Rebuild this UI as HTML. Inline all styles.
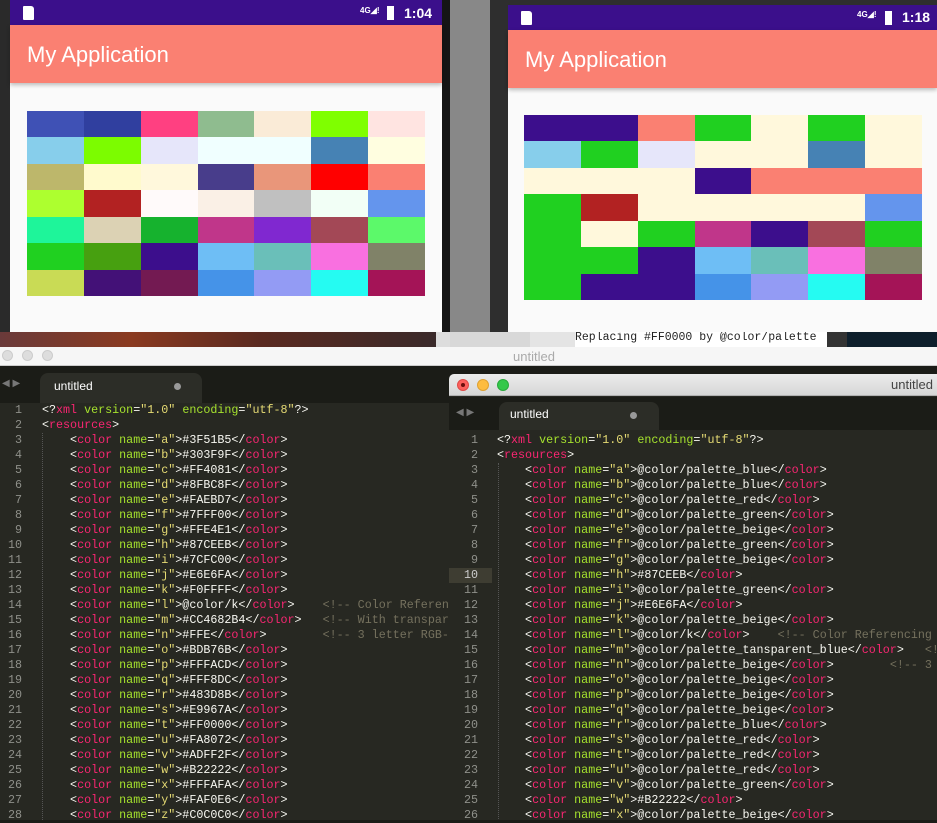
<!DOCTYPE html>
<html><head><meta charset="utf-8"><style>
*{margin:0;padding:0;box-sizing:border-box}
body{width:937px;height:820px;overflow:hidden;background:#1b1c17;position:relative;font-family:"Liberation Sans",sans-serif}
.abs{position:absolute}
.grid{position:absolute;display:grid;grid-template-columns:repeat(7,1fr);grid-template-rows:repeat(7,1fr)}
.code{position:absolute;font-family:"Liberation Mono",monospace;font-size:11.7px;line-height:15px;color:#f8f8f2;white-space:pre}
.code i{font-style:normal;color:#f92672}
.code b{font-weight:normal;color:#a6e22e}
.code u{text-decoration:none;color:#e6db74}
.code s{text-decoration:none;color:#75715e}
.ln{position:absolute;font-family:"Liberation Mono",monospace;font-size:11.7px;line-height:15px;color:#8f908a;text-align:right;white-space:pre}
.status{color:#fff;font-size:13px;font-weight:bold}
.title{color:#fff;font-size:22px}
</style></head><body>

<!-- left phone -->
<div class="abs" style="left:0;top:0;width:450px;height:332px;background:#2a2a2a"></div>
<div class="abs" style="left:442px;top:0;width:8px;height:332px;background:#151515"></div>
<div class="abs" style="left:10px;top:0;width:432px;height:332px;background:#fafafa"></div>
<div class="abs" style="left:10px;top:0;width:432px;height:25px;background:#3b0f8b"></div>
<div class="abs" style="left:23px;top:6px;width:11px;height:14px;background:#fff;border-radius:1px 3px 1px 1px"></div>
<div class="abs status" style="left:360px;top:6px;font-size:8px">4G◢!</div>
<div class="abs" style="left:387px;top:6px;width:7px;height:14px;background:#fff"></div>
<div class="abs status" style="left:404px;top:5px;font-size:14px">1:04</div>
<div class="abs" style="left:10px;top:25px;width:432px;height:58px;background:#fa8072;box-shadow:0 2px 4px rgba(0,0,0,.25)"></div>
<div class="abs title" style="left:27px;top:42px">My Application</div>
<div class="grid" style="left:27px;top:111px;width:398px;height:185px">
<div style="background:#3F51B5"></div><div style="background:#303F9F"></div><div style="background:#FF4081"></div><div style="background:#8FBC8F"></div><div style="background:#FAEBD7"></div><div style="background:#7FFF00"></div><div style="background:#FFE4E1"></div>
<div style="background:#87CEEB"></div><div style="background:#7CFC00"></div><div style="background:#E6E6FA"></div><div style="background:#F0FFFF"></div><div style="background:#F0FFFF"></div><div style="background:#4682B4"></div><div style="background:#FFFEE0"></div>
<div style="background:#BDB76B"></div><div style="background:#FFFACD"></div><div style="background:#FFF8DC"></div><div style="background:#483D8B"></div><div style="background:#E9967A"></div><div style="background:#FF0000"></div><div style="background:#FA8072"></div>
<div style="background:#ADFF2F"></div><div style="background:#B22222"></div><div style="background:#FFFAFA"></div><div style="background:#FAF0E6"></div><div style="background:#C0C0C0"></div><div style="background:#F2FFF6"></div><div style="background:#6495ED"></div>
<div style="background:#1EF59A"></div><div style="background:#DCD2B4"></div><div style="background:#16B22E"></div><div style="background:#C0368A"></div><div style="background:#8028D0"></div><div style="background:#A34856"></div><div style="background:#5CF96A"></div>
<div style="background:#20D020"></div><div style="background:#47A010"></div><div style="background:#3C0E8C"></div><div style="background:#6EBEF5"></div><div style="background:#6ABFB9"></div><div style="background:#F970E0"></div><div style="background:#808268"></div>
<div style="background:#C9DB55"></div><div style="background:#431177"></div><div style="background:#731A52"></div><div style="background:#4593E8"></div><div style="background:#939BF4"></div><div style="background:#25FBF2"></div><div style="background:#A41457"></div>
</div>

<!-- right phone -->
<div class="abs" style="left:450px;top:0;width:40px;height:332px;background:#888"></div>
<div class="abs" style="left:490px;top:0;width:447px;height:332px;background:#2e2e2e"></div>
<div class="abs" style="left:508px;top:5px;width:429px;height:327px;background:#fafafa"></div>
<div class="abs" style="left:508px;top:5px;width:429px;height:25px;background:#3b0f8b"></div>
<div class="abs" style="left:521px;top:11px;width:11px;height:14px;background:#fff;border-radius:1px 3px 1px 1px"></div>
<div class="abs status" style="left:857px;top:10px;font-size:8px">4G◢!</div>
<div class="abs" style="left:885px;top:11px;width:7px;height:14px;background:#fff"></div>
<div class="abs status" style="left:902px;top:9px;font-size:14px">1:18</div>
<div class="abs" style="left:508px;top:30px;width:429px;height:58px;background:#fa8072;box-shadow:0 2px 4px rgba(0,0,0,.25)"></div>
<div class="abs title" style="left:525px;top:47px">My Application</div>
<div class="grid" style="left:524px;top:115px;width:398px;height:185px">
<div style="background:#3C0E8C"></div><div style="background:#3C0E8C"></div><div style="background:#FA8072"></div><div style="background:#20D020"></div><div style="background:#FFF8DC"></div><div style="background:#20D020"></div><div style="background:#FFF8DC"></div>
<div style="background:#87CEEB"></div><div style="background:#20D020"></div><div style="background:#E6E6FA"></div><div style="background:#FFF8DC"></div><div style="background:#FFF8DC"></div><div style="background:#4682B4"></div><div style="background:#FFF8DC"></div>
<div style="background:#FFF8DC"></div><div style="background:#FFF8DC"></div><div style="background:#FFF8DC"></div><div style="background:#3C0E8C"></div><div style="background:#FA8072"></div><div style="background:#FA8072"></div><div style="background:#FA8072"></div>
<div style="background:#20D020"></div><div style="background:#B22222"></div><div style="background:#FFF8DC"></div><div style="background:#FFF8DC"></div><div style="background:#FFF8DC"></div><div style="background:#FFF8DC"></div><div style="background:#6495ED"></div>
<div style="background:#20D020"></div><div style="background:#FFF8DC"></div><div style="background:#20D020"></div><div style="background:#C0368A"></div><div style="background:#3C0E8C"></div><div style="background:#A34856"></div><div style="background:#20D020"></div>
<div style="background:#20D020"></div><div style="background:#20D020"></div><div style="background:#3C0E8C"></div><div style="background:#6EBEF5"></div><div style="background:#6ABFB9"></div><div style="background:#F970E0"></div><div style="background:#808268"></div>
<div style="background:#20D020"></div><div style="background:#3C0E8C"></div><div style="background:#3C0E8C"></div><div style="background:#4593E8"></div><div style="background:#939BF4"></div><div style="background:#25FBF2"></div><div style="background:#A41457"></div>
</div>

<!-- strip -->
<div class="abs" style="left:0;top:332px;width:436px;height:15px;background:linear-gradient(90deg,#6a3a3a,#8a3a20 30%,#5a2a20 60%,#3a2a2a)"></div>
<div class="abs" style="left:436px;top:332px;width:14px;height:15px;background:#ddd"></div>
<div class="abs" style="left:450px;top:332px;width:80px;height:15px;background:#d8d8d8"></div>
<div class="abs" style="left:530px;top:332px;width:45px;height:15px;background:#e4e4e4"></div>
<div class="abs" style="left:575px;top:332px;width:252px;height:15px;background:#fff;font-family:'Liberation Mono',monospace;font-size:11.5px;line-height:12px;color:#222;overflow:hidden;white-space:pre">Replacing #FF0000 by @color/palette</div>
<div class="abs" style="left:827px;top:332px;width:20px;height:15px;background:#333"></div>
<div class="abs" style="left:847px;top:332px;width:90px;height:15px;background:#0e1f2c"></div>

<div class="abs" style="left:0;top:347px;width:937px;height:19px;background:#f6f6f6;border-bottom:1px solid #ccc"></div>
<div class="abs" style="left:2px;top:350px;width:11px;height:11px;border-radius:50%;background:#ddd;border:1px solid #ccc"></div>
<div class="abs" style="left:22px;top:350px;width:11px;height:11px;border-radius:50%;background:#ddd;border:1px solid #ccc"></div>
<div class="abs" style="left:42px;top:350px;width:11px;height:11px;border-radius:50%;background:#ddd;border:1px solid #ccc"></div>
<div class="abs" style="left:513px;top:349px;font-size:13px;color:#aaa">untitled</div>

<!-- left editor -->
<div class="abs" style="left:0;top:366px;width:450px;height:37px;background:#1b1c17"></div>
<div class="abs" style="left:2px;top:378px;font-size:10px;color:#777">◀ ▶</div>
<div class="abs" style="left:40px;top:373px;width:162px;height:30px;background:#2c2d27;border-radius:8px 8px 0 0"></div>
<div class="abs" style="left:54px;top:379px;font-size:12px;color:#fff">untitled</div>
<div class="abs" style="left:174px;top:383px;width:7px;height:7px;border-radius:50%;background:#999"></div>
<div class="abs" style="left:0;top:403px;width:450px;height:417px;background:#272822"></div>
<div class="abs" style="left:42px;top:433px;width:1px;height:387px;border-left:1px dotted #555"></div>
<div class="ln" style="left:0;top:403px;width:22px">1
2
3
4
5
6
7
8
9
10
11
12
13
14
15
16
17
18
19
20
21
22
23
24
25
26
27
28</div>
<div class="code" style="left:42px;top:403px;width:408px;overflow:hidden">&lt;?<i>xml</i> <b>version</b>=<u>"1.0"</u> <b>encoding</b>=<u>"utf-8"</u>?&gt;
&lt;<i>resources</i>&gt;
    &lt;<i>color</i> <b>name</b>=<u>"a"</u>&gt;#3F51B5&lt;/<i>color</i>&gt;
    &lt;<i>color</i> <b>name</b>=<u>"b"</u>&gt;#303F9F&lt;/<i>color</i>&gt;
    &lt;<i>color</i> <b>name</b>=<u>"c"</u>&gt;#FF4081&lt;/<i>color</i>&gt;
    &lt;<i>color</i> <b>name</b>=<u>"d"</u>&gt;#8FBC8F&lt;/<i>color</i>&gt;
    &lt;<i>color</i> <b>name</b>=<u>"e"</u>&gt;#FAEBD7&lt;/<i>color</i>&gt;
    &lt;<i>color</i> <b>name</b>=<u>"f"</u>&gt;#7FFF00&lt;/<i>color</i>&gt;
    &lt;<i>color</i> <b>name</b>=<u>"g"</u>&gt;#FFE4E1&lt;/<i>color</i>&gt;
    &lt;<i>color</i> <b>name</b>=<u>"h"</u>&gt;#87CEEB&lt;/<i>color</i>&gt;
    &lt;<i>color</i> <b>name</b>=<u>"i"</u>&gt;#7CFC00&lt;/<i>color</i>&gt;
    &lt;<i>color</i> <b>name</b>=<u>"j"</u>&gt;#E6E6FA&lt;/<i>color</i>&gt;
    &lt;<i>color</i> <b>name</b>=<u>"k"</u>&gt;#F0FFFF&lt;/<i>color</i>&gt;
    &lt;<i>color</i> <b>name</b>=<u>"l"</u>&gt;@color/k&lt;/<i>color</i>&gt;    <s>&lt;!-- Color Referencing --&gt;</s>
    &lt;<i>color</i> <b>name</b>=<u>"m"</u>&gt;#CC4682B4&lt;/<i>color</i>&gt;   <s>&lt;!-- With transparency --&gt;</s>
    &lt;<i>color</i> <b>name</b>=<u>"n"</u>&gt;#FFE&lt;/<i>color</i>&gt;        <s>&lt;!-- 3 letter RGB--&gt;</s>
    &lt;<i>color</i> <b>name</b>=<u>"o"</u>&gt;#BDB76B&lt;/<i>color</i>&gt;
    &lt;<i>color</i> <b>name</b>=<u>"p"</u>&gt;#FFFACD&lt;/<i>color</i>&gt;
    &lt;<i>color</i> <b>name</b>=<u>"q"</u>&gt;#FFF8DC&lt;/<i>color</i>&gt;
    &lt;<i>color</i> <b>name</b>=<u>"r"</u>&gt;#483D8B&lt;/<i>color</i>&gt;
    &lt;<i>color</i> <b>name</b>=<u>"s"</u>&gt;#E9967A&lt;/<i>color</i>&gt;
    &lt;<i>color</i> <b>name</b>=<u>"t"</u>&gt;#FF0000&lt;/<i>color</i>&gt;
    &lt;<i>color</i> <b>name</b>=<u>"u"</u>&gt;#FA8072&lt;/<i>color</i>&gt;
    &lt;<i>color</i> <b>name</b>=<u>"v"</u>&gt;#ADFF2F&lt;/<i>color</i>&gt;
    &lt;<i>color</i> <b>name</b>=<u>"w"</u>&gt;#B22222&lt;/<i>color</i>&gt;
    &lt;<i>color</i> <b>name</b>=<u>"x"</u>&gt;#FFFAFA&lt;/<i>color</i>&gt;
    &lt;<i>color</i> <b>name</b>=<u>"y"</u>&gt;#FAF0E6&lt;/<i>color</i>&gt;
    &lt;<i>color</i> <b>name</b>=<u>"z"</u>&gt;#C0C0C0&lt;/<i>color</i>&gt;</div>

<!-- right editor window -->
<div class="abs" style="left:449px;top:374px;width:488px;height:446px;background:#272822;border-radius:5px 0 0 0;overflow:hidden">
  <div class="abs" style="left:0;top:0;width:488px;height:22px;background:linear-gradient(#ececec,#d6d6d6);border-bottom:1px solid #b0b0b0"></div>
  <div class="abs" style="left:8px;top:5px;width:12px;height:12px;border-radius:50%;background:#fc605c;border:1px solid #de4a46"></div>
  <div class="abs" style="left:12px;top:9px;width:4px;height:4px;border-radius:50%;background:#6b0f0c"></div>
  <div class="abs" style="left:28px;top:5px;width:12px;height:12px;border-radius:50%;background:#fdbc40;border:1px solid #dea030"></div>
  <div class="abs" style="left:48px;top:5px;width:12px;height:12px;border-radius:50%;background:#34c84a;border:1px solid #27a83a"></div>
  <div class="abs" style="left:442px;top:3px;font-size:13px;color:#444">untitled</div>
  <div class="abs" style="left:0;top:23px;width:488px;height:33px;background:#1b1c17"></div>
  <div class="abs" style="left:7px;top:33px;font-size:10px;color:#777">◀ ▶</div>
  <div class="abs" style="left:50px;top:28px;width:160px;height:28px;background:#2c2d27;border-radius:8px 8px 0 0"></div>
  <div class="abs" style="left:61px;top:33px;font-size:12px;color:#fff">untitled</div>
  <div class="abs" style="left:181px;top:38px;width:7px;height:7px;border-radius:50%;background:#999"></div>
  <div class="abs" style="left:0;top:194px;width:43px;height:15px;background:#3e3d32"></div>
  <div class="abs" style="left:49px;top:89px;width:1px;height:360px;border-left:1px dotted #555"></div>
  <div class="ln" style="left:0;top:59px;width:29px">1
2
3
4
5
6
7
8
9
<span style="color:#ccc">10</span>
11
12
13
14
15
16
17
18
19
20
21
22
23
24
25
26</div>
  <div class="code" style="left:48px;top:59px">&lt;?<i>xml</i> <b>version</b>=<u>"1.0"</u> <b>encoding</b>=<u>"utf-8"</u>?&gt;
&lt;<i>resources</i>&gt;
    &lt;<i>color</i> <b>name</b>=<u>"a"</u>&gt;@color/palette_blue&lt;/<i>color</i>&gt;
    &lt;<i>color</i> <b>name</b>=<u>"b"</u>&gt;@color/palette_blue&lt;/<i>color</i>&gt;
    &lt;<i>color</i> <b>name</b>=<u>"c"</u>&gt;@color/palette_red&lt;/<i>color</i>&gt;
    &lt;<i>color</i> <b>name</b>=<u>"d"</u>&gt;@color/palette_green&lt;/<i>color</i>&gt;
    &lt;<i>color</i> <b>name</b>=<u>"e"</u>&gt;@color/palette_beige&lt;/<i>color</i>&gt;
    &lt;<i>color</i> <b>name</b>=<u>"f"</u>&gt;@color/palette_green&lt;/<i>color</i>&gt;
    &lt;<i>color</i> <b>name</b>=<u>"g"</u>&gt;@color/palette_beige&lt;/<i>color</i>&gt;
    &lt;<i>color</i> <b>name</b>=<u>"h"</u>&gt;#87CEEB&lt;/<i>color</i>&gt;
    &lt;<i>color</i> <b>name</b>=<u>"i"</u>&gt;@color/palette_green&lt;/<i>color</i>&gt;
    &lt;<i>color</i> <b>name</b>=<u>"j"</u>&gt;#E6E6FA&lt;/<i>color</i>&gt;
    &lt;<i>color</i> <b>name</b>=<u>"k"</u>&gt;@color/palette_beige&lt;/<i>color</i>&gt;
    &lt;<i>color</i> <b>name</b>=<u>"l"</u>&gt;@color/k&lt;/<i>color</i>&gt;    <s>&lt;!-- Color Referencing --&gt;</s>
    &lt;<i>color</i> <b>name</b>=<u>"m"</u>&gt;@color/palette_tansparent_blue&lt;/<i>color</i>&gt;   <s>&lt;!-- With transparency --&gt;</s>
    &lt;<i>color</i> <b>name</b>=<u>"n"</u>&gt;@color/palette_beige&lt;/<i>color</i>&gt;        <s>&lt;!-- 3 letter RGB--&gt;</s>
    &lt;<i>color</i> <b>name</b>=<u>"o"</u>&gt;@color/palette_beige&lt;/<i>color</i>&gt;
    &lt;<i>color</i> <b>name</b>=<u>"p"</u>&gt;@color/palette_beige&lt;/<i>color</i>&gt;
    &lt;<i>color</i> <b>name</b>=<u>"q"</u>&gt;@color/palette_beige&lt;/<i>color</i>&gt;
    &lt;<i>color</i> <b>name</b>=<u>"r"</u>&gt;@color/palette_blue&lt;/<i>color</i>&gt;
    &lt;<i>color</i> <b>name</b>=<u>"s"</u>&gt;@color/palette_red&lt;/<i>color</i>&gt;
    &lt;<i>color</i> <b>name</b>=<u>"t"</u>&gt;@color/palette_red&lt;/<i>color</i>&gt;
    &lt;<i>color</i> <b>name</b>=<u>"u"</u>&gt;@color/palette_red&lt;/<i>color</i>&gt;
    &lt;<i>color</i> <b>name</b>=<u>"v"</u>&gt;@color/palette_green&lt;/<i>color</i>&gt;
    &lt;<i>color</i> <b>name</b>=<u>"w"</u>&gt;#B22222&lt;/<i>color</i>&gt;
    &lt;<i>color</i> <b>name</b>=<u>"x"</u>&gt;@color/palette_beige&lt;/<i>color</i>&gt;</div>
</div>
</body></html>
